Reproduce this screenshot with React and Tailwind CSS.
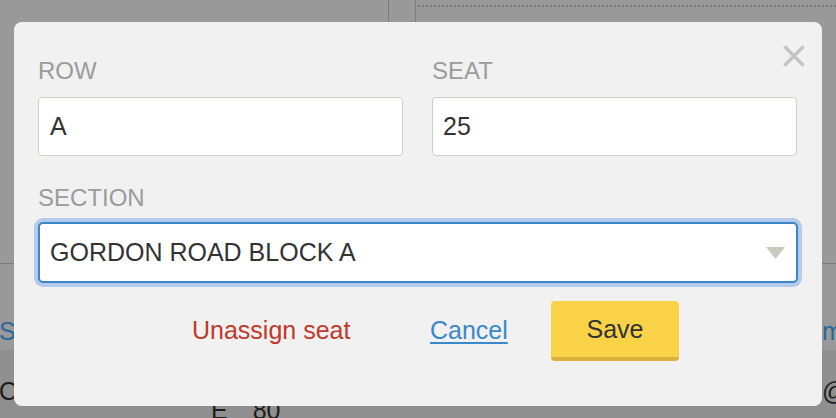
import React from "react";

const font = { fontFamily: '"Liberation Sans", Arial, Helvetica, sans-serif' };

function CloseIcon() {
  return (
    <svg width="22" height="22" viewBox="0 0 22 22" fill="none">
      <path d="M1.5 1.5 L20.5 20.5 M20.5 1.5 L1.5 20.5" stroke="#c3c3c3" strokeWidth="3.2" />
    </svg>
  );
}

function Caret() {
  return (
    <svg width="19" height="12" viewBox="0 0 19 12">
      <polygon points="0,0 19,0 9.5,12" fill="#c9c9bd" />
    </svg>
  );
}

export default function App() {
  return (
    <div
      className="relative w-[836px] h-[418px] overflow-hidden bg-[#999999]"
      style={font}
    >
      {/* Background page (dimmed) */}
      <div className="flex flex-col w-full h-full">
        <div className="h-[264px] shrink-0 border-b border-[#7c7c7c] flex">
          <div className="w-[389px] border-r border-[#7d7d74]" />
          <div className="w-[27px] border-r border-[#7d7d74]" />
          <div className="flex-1 pl-[2px]">
            <div className="mt-[5px] border-t-2 border-dotted border-[#7a7a7a]" />
          </div>
        </div>
        <div className="h-[86px] shrink-0 flex text-[25px] leading-[28px] text-[#2b679c] pt-[53px] whitespace-nowrap">
          <div className="w-[823px] shrink-0 -ml-[1px]">Se</div>
          <div className="shrink-0">ma</div>
        </div>
        <div className="flex-1 bg-[#8f8f8f] text-[25px] leading-[28px] text-[#1c1c1c] whitespace-nowrap">
          <div className="flex pt-[27px]">
            <div className="w-[823px] shrink-0 -ml-[1px]">O</div>
            <div className="shrink-0">@</div>
          </div>
          <div className="flex -mt-[9px]">
            <div className="ml-[211px]">E</div>
            <div className="ml-[25px]">80</div>
          </div>
        </div>
      </div>

      {/* Modal */}
      <div className="absolute left-[14px] top-[22px] w-[808px] h-[384px] rounded-[8px] bg-[#f1f1f1] px-[24px] pt-[35px]">
        <button className="absolute right-[17px] top-[23px] w-[22px] h-[22px] flex items-center justify-center">
          <CloseIcon />
        </button>

        <div className="flex gap-[29px]">
          <div className="w-[365px]">
            <div className="text-[24px] leading-[28px] text-[#9b9b9b]">ROW</div>
            <div className="mt-[12px] h-[59px] rounded-[4px] border border-[#cfcfc3] bg-white flex items-center px-[11px] text-[25px] text-[#333333]">
              A
            </div>
          </div>
          <div className="w-[365px]">
            <div className="text-[24px] leading-[28px] text-[#9b9b9b]">SEAT</div>
            <div className="mt-[12px] h-[59px] rounded-[4px] border border-[#cfcfc3] bg-white flex items-center px-[10px] text-[25px] text-[#333333]">
              25
            </div>
          </div>
        </div>

        <div className="mt-[28px] text-[24px] leading-[28px] text-[#9b9b9b]">SECTION</div>
        <div className="mt-[10px] h-[61px] rounded-[5px] border-2 border-[#3b86c8] bg-white shadow-[0_0_0_4px_#b5c9ea] flex items-center justify-between pl-[10px] pr-[11px] text-[25px] text-[#333333]">
          <span>GORDON ROAD BLOCK A</span>
          <Caret />
        </div>

        <div className="mt-[18px] flex items-center h-[60px] text-[25px] whitespace-nowrap">
          <span className="ml-[154px] w-[159px] shrink-0 text-[#c0392b]">Unassign seat</span>
          <span className="ml-[79px] w-[78px] shrink-0">
            <span className="text-[#3a88c9] underline decoration-2 underline-offset-[3px]">Cancel</span>
          </span>
          <button className="ml-[43px] shrink-0 w-[128px] h-[60px] rounded-[4px] bg-[#f9d248] border-b-[4px] border-[#d6b13c] text-[#333333] text-[25px] flex items-center justify-center pt-[2px]">
            Save
          </button>
        </div>
      </div>
    </div>
  );
}
